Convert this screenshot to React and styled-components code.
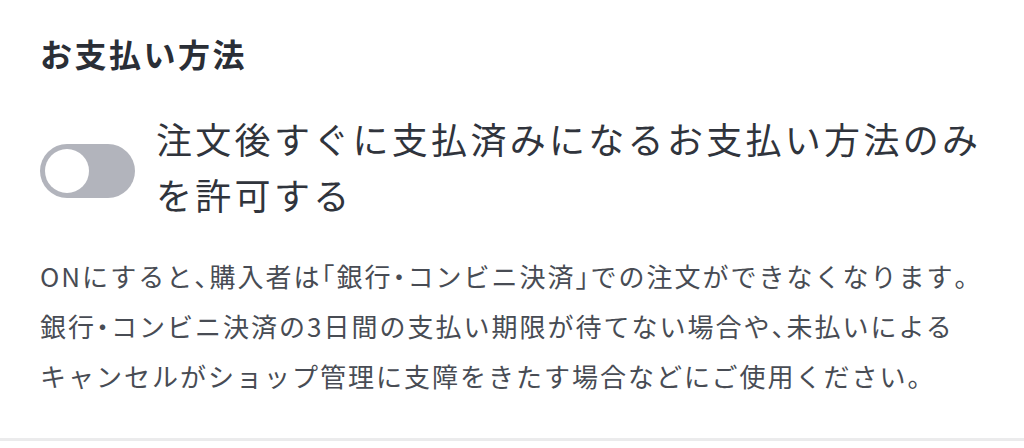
import React, { useState } from 'react'
import styled, { createGlobalStyle } from 'styled-components'

const GlobalStyle = createGlobalStyle`
  html, body {
    margin: 0;
    padding: 0;
    background: #ffffff;
  }
  body {
    font-family: "Noto Sans CJK JP", "Noto Sans", sans-serif;
    -webkit-font-smoothing: antialiased;
  }
`

function App() {
  const [onlyPaid, setOnlyPaid] = useState(false)

  return (
    <>
      <GlobalStyle />
      <Section>
        <Title>お支払い方法</Title>

        <ToggleRow>
          <Switch
            type="button"
            role="switch"
            aria-checked={onlyPaid}
            $on={onlyPaid}
            onClick={() => setOnlyPaid(v => !v)}
          >
            <Knob $on={onlyPaid} />
          </Switch>
          <Label>注文後すぐに支払済みになるお支払い方法のみを許可する</Label>
        </ToggleRow>

        <Note>
          ONにすると<Punct>、</Punct>購入者は<Punct>「</Punct>銀行<Punct>・</Punct>コンビニ決済<Punct>」</Punct>での注文ができなくなります<Punct>。</Punct>
          銀行<Punct>・</Punct>コンビニ決済の3日間の支払い期限が待てない場合や<Punct>、</Punct>未払いによるキャンセルがショップ管理に支障をきたす場合などにご使用ください。
        </Note>
      </Section>
      <Divider />
    </>
  )
}

const Section = styled.section`
  padding: 30px 40px 0;
  display: flex;
  flex-direction: column;
`

const Title = styled.h2`
  margin: 0;
  font-size: 32px;
  line-height: 46px;
  font-weight: 700;
  letter-spacing: 2.5px;
  color: #2a2e36;
`

const ToggleRow = styled.div`
  margin-top: 34px;
  display: flex;
  align-items: center;
  gap: 21px;
`

const Switch = styled.button`
  flex: none;
  position: relative;
  width: 95px;
  height: 54px;
  margin-top: 10px;
  padding: 0;
  border: none;
  border-radius: 27px;
  background: ${p => (p.$on ? '#34c759' : '#b2b4bc')};
  cursor: pointer;
`

const Knob = styled.span`
  position: absolute;
  top: 5px;
  left: ${p => (p.$on ? '46px' : '5px')};
  width: 44px;
  height: 44px;
  border-radius: 50%;
  background: #ffffff;
  transition: left 0.2s;
`

const Label = styled.div`
  flex: 1;
  font-size: 36px;
  line-height: 56px;
  letter-spacing: 3.3px;
  color: #30343c;
`

const Note = styled.p`
  margin: 29px 0 0;
  max-width: 940px;
  font-size: 26px;
  line-height: 50px;
  letter-spacing: 2px;
  color: #484c54;
`

const Punct = styled.span`
  font-feature-settings: "halt";
`

const Divider = styled.div`
  margin-top: 37px;
  height: 3px;
  background: #ebebec;
`

export default App
